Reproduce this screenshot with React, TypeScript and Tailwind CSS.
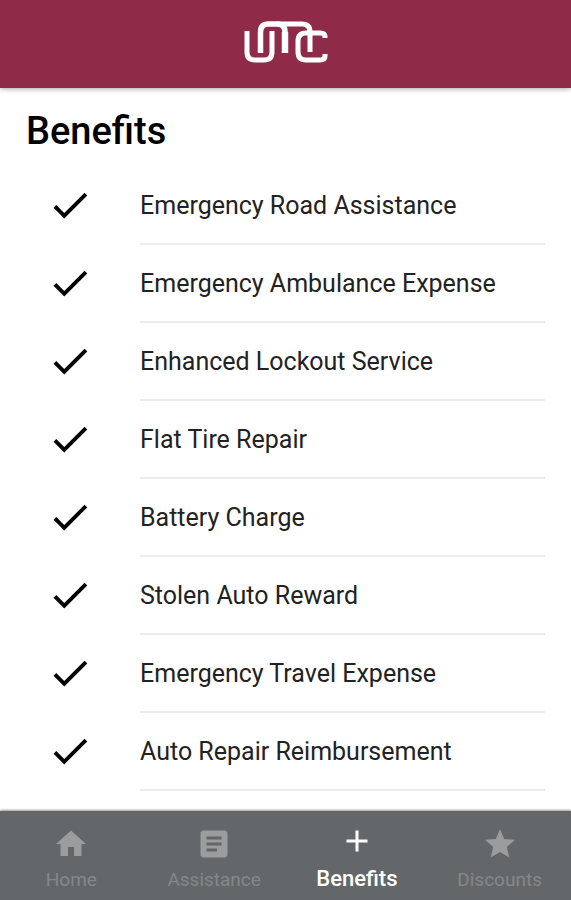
const benefits = [
  "Emergency Road Assistance",
  "Emergency Ambulance Expense",
  "Enhanced Lockout Service",
  "Flat Tire Repair",
  "Battery Charge",
  "Stolen Auto Reward",
  "Emergency Travel Expense",
  "Auto Repair Reimbursement",
];

const tabs = [
  { label: "Home", path: "M10 20v-6h4v6h5v-8h3L12 3 2 12h3v8z" },
  {
    label: "Assistance",
    path: "M19 3H5c-1.1 0-2 .9-2 2v14c0 1.1.9 2 2 2h14c1.1 0 2-.9 2-2V5c0-1.1-.9-2-2-2zm-5 14H7v-2h7v2zm3-4H7v-2h10v2zm0-4H7V7h10v2z",
  },
  { label: "Benefits", path: "M19 13h-6v6h-2v-6H5v-2h6V5h2v6h6v2z" },
  {
    label: "Discounts",
    path: "M12 17.27L18.18 21l-1.64-7.03L22 9.24l-7.19-.61L12 2 9.19 8.63 2 9.24l5.46 4.73L5.82 21z",
  },
];

function Logo() {
  return (
    <svg role="img" aria-label="UMC" viewBox="0 0 86 44" className="mb-1 h-11 w-[86px]" fill="none" stroke="#fff" strokeWidth="5">
      <path d="M4 11V32Q4 40 12 40H21Q29 40 29 32V11" />
      <path d="M17.500 33V12Q17.500 4 25.500 4H34Q42 4 42 12V33" strokeWidth="5.500" />
      <path d="M34 4H59Q67 4 67 12V32" />
      <path d="M42 33V12" strokeWidth="6.500" />
      <path d="M82 18V16.500Q82 13 77 13H63Q55 13 55 21V32Q55 40 63 40H77Q82 40 82 36V34" />
    </svg>
  );
}

export default function App() {
  return (
    <div className="flex h-screen flex-col bg-white font-[Roboto,sans-serif]">
      <header className="z-10 flex h-[88px] shrink-0 items-center justify-center bg-[#8f2a48] shadow-[0_1px_5px_rgba(0,0,0,0.35)]">
        <Logo />
      </header>
      <main className="min-h-0 flex-1 overflow-hidden">
        <h1 className="px-[26px] pt-[21px] pb-3.5 text-[38px] leading-[44px] font-medium text-black">Benefits</h1>
        <ul>
          {benefits.map((name) => (
            <li key={name} className="flex h-[78px] items-stretch pr-[26px]">
              <div className="flex w-[140px] items-center justify-center pb-0.5">
                <svg viewBox="0 0 24 24" className="size-[46px]" fill="#000" aria-hidden="true">
                  <path d="M9 16.17L4.83 12l-1.42 1.41L9 19 21 7l-1.41-1.41z" />
                </svg>
              </div>
              <div className="flex flex-1 items-center border-b-2 border-[#ececec] pt-0.5 text-[25px] text-[#222]">{name}</div>
            </li>
          ))}
        </ul>
      </main>
      <nav className="z-10 grid h-[89px] shrink-0 grid-cols-4 bg-[#636769] shadow-[0_-1px_2px_rgba(0,0,0,0.4)]">
        {tabs.map(({ label, path }) => {
          const active = label === "Benefits";
          return (
            <button
              key={label}
              type="button"
              aria-current={active ? "page" : undefined}
              className={
                active
                  ? "flex flex-col items-center gap-2 pt-3 text-[22px] leading-6 font-medium text-white"
                  : "flex flex-col items-center gap-1.5 pt-[15px] text-[19px] leading-6 text-[#85888a]"
              }
            >
              <svg viewBox="0 0 24 24" className={active ? "size-9" : "size-9 text-[#9a9c9d]"} fill="currentColor" aria-hidden="true">
                <path d={path} />
              </svg>
              {label}
            </button>
          );
        })}
      </nav>
    </div>
  );
}
